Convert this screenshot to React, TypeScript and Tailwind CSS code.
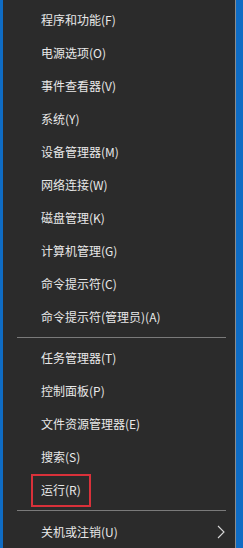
import React from "react";

const group1 = [
  "程序和功能(F)",
  "电源选项(O)",
  "事件查看器(V)",
  "系统(Y)",
  "设备管理器(M)",
  "网络连接(W)",
  "磁盘管理(K)",
  "计算机管理(G)",
  "命令提示符(C)",
  "命令提示符(管理员)(A)",
];
const group2 = ["任务管理器(T)", "控制面板(P)", "文件资源管理器(E)", "搜索(S)"];

function Row({ label }: { label: string }) {
  return (
    <div className="h-[33px] flex items-center pl-[38px] text-[12px] text-[#e8e8e8]">
      {label}
    </div>
  );
}

function Sep() {
  return (
    <div className="h-[8.5px] flex items-center pl-[14px] pr-[9px]">
      <div className="h-px w-full bg-[#7a7a7a]" />
    </div>
  );
}

export default function App() {
  return (
    <div
      className="flex h-[548px] w-[243px] overflow-hidden"
      style={{ fontFamily: '"Noto Sans CJK SC", "Noto Sans", sans-serif' }}
    >
      <div className="w-[3px] bg-[#0f6cc4]" />
      <div className="flex-1 bg-[#2b2b2b] border-r border-[#8c8c8c] pt-[3px] flex flex-col">
        {group1.map((l) => (
          <Row key={l} label={l} />
        ))}
        <Sep />
        {group2.map((l) => (
          <Row key={l} label={l} />
        ))}
        <div className="h-[33px] flex items-center pl-[28px]">
          <div className="h-[33px] w-[60px] border-2 border-[#d9313a] flex items-center pl-[8px] text-[12px] text-[#e8e8e8]">
            运行(R)
          </div>
        </div>
        <Sep />
        <div className="h-[33px] flex items-center pl-[38px] pr-[10px] text-[12px] text-[#e8e8e8] justify-between">
          <span>关机或注销(U)</span>
          <svg width="8" height="14" viewBox="0 0 8 14" className="mr-[0px]">
            <path d="M1 1 L7 7 L1 13" fill="none" stroke="#d8d8d8" strokeWidth="1.1" />
          </svg>
        </div>
      </div>
      <div className="w-[7px] bg-[#0f6cc4]" />
    </div>
  );
}
